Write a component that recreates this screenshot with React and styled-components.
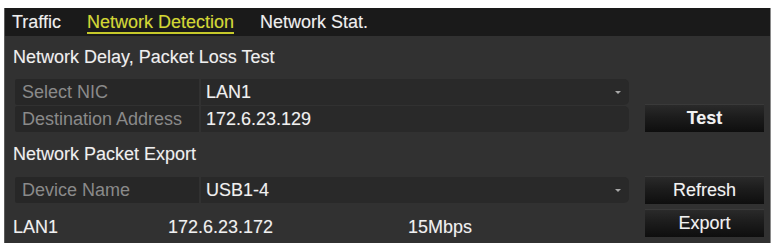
import React from "react";
import styled, { createGlobalStyle } from "styled-components";

const GlobalStyle = createGlobalStyle`
  html, body {
    margin: 0;
    padding: 0;
    background: #ffffff;
  }
  body {
    font-family: "Liberation Sans", Arial, sans-serif;
  }
`;

const Page = styled.div`
  padding: 8px 2px 0 4px;
  height: 243px;
  box-sizing: border-box;
  overflow: hidden;
`;

const Panel = styled.div`
  height: 235px;
  background: #313131;
  border-left: 1px solid #5c5c5c;
  border-right: 1px solid #8a8a8a;
  display: flex;
  flex-direction: column;
  color: #ececec;
  font-size: 18px;
  text-shadow: 0 0 1px rgba(255, 255, 255, 0.25);
`;

const TabBar = styled.div`
  height: 28px;
  background: #1a1a1a;
  display: flex;
  align-items: center;
  padding-left: 7px;
  gap: 26px;
  flex-shrink: 0;
`;

const Tab = styled.div`
  color: ${(p) => (p.$active ? "#d3d82c" : "#efefef")};
  line-height: 20px;
  border-bottom: 2px solid ${(p) => (p.$active ? "#c6c92a" : "transparent")};
  margin-top: 2px;
`;

const Body = styled.div`
  padding: 0 6px 0 8px;
  display: flex;
  flex-direction: column;
`;

const SectionTitle = styled.div`
  height: ${(p) => p.$h}px;
  display: flex;
  align-items: center;
  color: #efefef;
`;

const Row = styled.div`
  display: flex;
  align-items: ${(p) => p.$align || "center"};
  gap: 16px;
  margin-top: ${(p) => p.$mt || 0}px;
`;

const Table = styled.div`
  margin-left: 2px;
  width: 615px;
  display: flex;
  flex-direction: column;
  gap: 1px;
`;

const Field = styled.div`
  display: flex;
  height: 26px;
  gap: 2px;
`;

const Label = styled.div`
  width: 184px;
  background: #272727;
  color: #8a8a8a;
  text-shadow: none;
  display: flex;
  align-items: center;
  padding-left: 7px;
  box-sizing: border-box;
  border-radius: 2px 0 0 2px;
`;

const Value = styled.div`
  flex: 1;
  background: #292929;
  display: flex;
  align-items: center;
  justify-content: space-between;
  padding: 0 8px 0 5px;
  border-radius: 0 5px 5px 0;
  color: #f0f0f0;
`;

const Caret = styled.span`
  width: 0;
  height: 0;
  border-left: 3px solid transparent;
  border-right: 3px solid transparent;
  border-top: 3px solid #a8a8a8;
  margin-top: 1px;
`;

const Button = styled.div`
  width: 119px;
  height: 28px;
  box-sizing: border-box;
  background: linear-gradient(#2a2a2a 0%, #1c1c1c 45%, #0e0e0e 100%);
  border-top: 1px solid #3a3a3a;
  display: flex;
  align-items: center;
  justify-content: center;
  color: #f2f2f2;
  font-weight: ${(p) => (p.$bold ? 700 : 400)};
  flex-shrink: 0;
`;

const Info = styled.div`
  width: 617px;
  display: grid;
  grid-template-columns: 155px 240px 1fr;
  padding-top: 9px;
  color: #f0f0f0;
`;

const App = () => {
  return (
    <>
      <GlobalStyle />
      <Page>
        <Panel>
          <TabBar>
            <Tab>Traffic</Tab>
            <Tab $active>Network Detection</Tab>
            <Tab>Network Stat.</Tab>
          </TabBar>
          <Body>
            <SectionTitle $h={43}>Network Delay, Packet Loss Test</SectionTitle>
            <Row $align="flex-end">
              <Table>
                <Field>
                  <Label>Select NIC</Label>
                  <Value>
                    LAN1
                    <Caret />
                  </Value>
                </Field>
                <Field>
                  <Label>Destination Address</Label>
                  <Value>172.6.23.129</Value>
                </Field>
              </Table>
              <Button $bold>Test</Button>
            </Row>
            <SectionTitle $h={44}>Network Packet Export</SectionTitle>
            <Row>
              <Table>
                <Field>
                  <Label>Device Name</Label>
                  <Value>
                    USB1-4
                    <Caret />
                  </Value>
                </Field>
              </Table>
              <Button>Refresh</Button>
            </Row>
            <Row $mt={4}>
              <Info>
                <span>LAN1</span>
                <span>172.6.23.172</span>
                <span>15Mbps</span>
              </Info>
              <Button>Export</Button>
            </Row>
          </Body>
        </Panel>
      </Page>
    </>
  );
};

export default App;
